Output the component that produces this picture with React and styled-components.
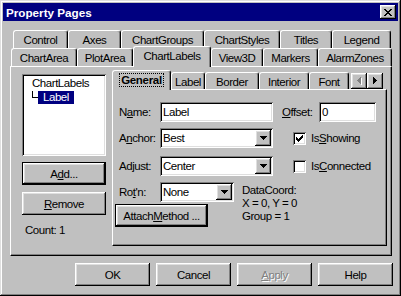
import styled, { createGlobalStyle, css } from "styled-components";

const GlobalStyle = createGlobalStyle`
  html, body {
    margin: 0;
    padding: 0;
    background: #c0c0c0;
  }
`;

const raised = css`
  background: #c0c0c0;
  box-shadow: inset -1px -1px #000, inset 1px 1px #fff, inset -2px -2px #808080,
    inset 2px 2px #dfdfdf;
`;

const sunken = css`
  background: #fff;
  box-shadow: inset 1px 1px #808080, inset -1px -1px #fff, inset 2px 2px #000,
    inset -2px -2px #dfdfdf;
`;

const Window = styled.div`
  width: 401px;
  height: 296px;
  box-sizing: border-box;
  padding: 3px;
  background: #c0c0c0;
  box-shadow: inset -1px -1px #000, inset 1px 1px #dfdfdf, inset -2px -2px #808080,
    inset 2px 2px #fff;
  display: flex;
  flex-direction: column;
  font-family: "Liberation Sans", Arial, sans-serif;
  font-size: 11.5px;
  letter-spacing: -0.45px;
  color: #000;
`;

const TitleBar = styled.div`
  height: 18px;
  background: #000080;
  display: flex;
  align-items: center;
  justify-content: space-between;
  padding: 0 2px 0 3px;
`;

const Title = styled.span`
  font-weight: 700;
  font-size: 11.7px;
  letter-spacing: 0;
  color: #fff;
`;

const CloseButton = styled.div`
  ${raised};
  width: 16px;
  height: 14px;
  display: flex;
  align-items: center;
  justify-content: center;
`;

const Content = styled.div`
  flex: 1;
  display: flex;
  flex-direction: column;
  padding: 9px 6px 0 7px;
`;

const TabRow = styled.div`
  display: flex;
  align-items: flex-end;
  height: ${(p) => p.$h}px;
  margin-left: ${(p) => p.$indent}px;
  margin-top: ${(p) => p.$mt || 0}px;
`;

const Tab = styled.div`
  box-sizing: border-box;
  width: ${(p) => p.$w}px;
  height: ${(p) => p.$h}px;
  background: #c0c0c0;
  border-top: 1px solid #fff;
  border-left: 1px solid #fff;
  border-right: 1px solid #000;
  border-radius: 3px 3px 0 0;
  box-shadow: inset -1px 0 #808080;
  display: flex;
  align-items: center;
  justify-content: center;
  padding-top: 1px;
  white-space: nowrap;
  ${(p) =>
    p.$active &&
    css`
      position: relative;
      z-index: 1;
      margin-bottom: -1px;
      padding-top: 0;
      padding-bottom: 2px;
    `}
`;

const Panel = styled.div`
  box-sizing: border-box;
  height: ${(p) => p.$h}px;
  border-top: 1px solid #fff;
  border-left: 1px solid #fff;
  border-right: 1px solid #000;
  border-bottom: 1px solid #000;
  box-shadow: inset -1px -1px #808080;
  background: #c0c0c0;
`;

const OuterPanel = styled(Panel)`
  display: flex;
  padding: 3px 0 0 11px;
`;

const LeftColumn = styled.div`
  width: 84px;
  margin-top: 4px;
  display: flex;
  flex-direction: column;
`;

const TreeBox = styled.div`
  ${sunken};
  height: 82px;
  box-sizing: border-box;
  padding: 3px 0 0 10px;
  display: flex;
  flex-direction: column;
  line-height: 13px;
`;

const TreeChild = styled.div`
  display: flex;
  align-items: flex-start;
  margin-top: 1px;
`;

const Connector = styled.span`
  width: 5px;
  height: 6px;
  border-left: 1px solid #000;
  border-bottom: 1px solid #000;
`;

const Selected = styled.span`
  background: #000080;
  color: #fff;
  padding: 0 5px;
  height: 13px;
  line-height: 13px;
`;

const Button = styled.div`
  ${raised};
  box-sizing: border-box;
  width: ${(p) => (p.$w ? `${p.$w}px` : "100%")};
  height: 23px;
  margin-top: ${(p) => p.$mt || 0}px;
  margin-left: ${(p) => p.$ml || 0}px;
  display: flex;
  align-items: center;
  justify-content: center;
  white-space: nowrap;
  ${(p) =>
    p.$default &&
    css`
      border: 1px solid #000;
    `}
  ${(p) =>
    p.$disabled &&
    css`
      color: #808080;
      text-shadow: 1px 1px #fff;
    `}
`;

const Count = styled.div`
  margin-top: 9px;
  padding-left: 3px;
  line-height: 13px;
`;

const Inner = styled.div`
  margin-left: 6px;
  width: 275px;
  display: flex;
  flex-direction: column;
`;

const ScrollButton = styled.div`
  ${raised};
  width: 16px;
  height: 16px;
  align-self: flex-start;
  margin-top: 3px;
  margin-left: ${(p) => p.$ml || 0}px;
  display: flex;
  align-items: center;
  justify-content: center;
`;

const InnerPanel = styled(Panel)`
  padding: 12px 0 0 6px;
  display: flex;
  flex-direction: column;
`;

const FormRow = styled.div`
  display: flex;
  align-items: center;
  height: 20px;
  margin-top: ${(p) => p.$mt || 0}px;
`;

const FieldLabel = styled.span`
  width: ${(p) => p.$w || 41}px;
  margin-left: ${(p) => p.$ml || 0}px;
  white-space: nowrap;
`;

const TextField = styled.div`
  ${sunken};
  box-sizing: border-box;
  width: ${(p) => p.$w}px;
  height: 20px;
  padding-left: 3px;
  display: flex;
  align-items: center;
`;

const Combo = styled(TextField)`
  justify-content: space-between;
  padding-right: 2px;
`;

const DropButton = styled.div`
  ${raised};
  width: 16px;
  height: 16px;
  display: flex;
  align-items: center;
  justify-content: center;
`;

const CheckGroup = styled.div`
  display: flex;
  align-items: center;
  gap: 5px;
  margin-left: 20px;
`;

const CheckBox = styled.div`
  ${sunken};
  width: 13px;
  height: 13px;
  display: flex;
  align-items: center;
  justify-content: center;
`;

const BottomBlock = styled.div`
  display: flex;
  margin-top: 6px;
`;

const LeftStack = styled.div`
  width: 115px;
  display: flex;
  flex-direction: column;
`;

const DataCoord = styled.div`
  margin-left: 8px;
  margin-top: 2px;
  line-height: 13px;
`;

const ButtonRow = styled.div`
  display: flex;
  justify-content: flex-end;
  gap: 6px;
  margin-top: 7px;
  margin-right: -1px;
`;

const U = styled.span`
  text-decoration: underline;
`;

const Focus = styled.span`
  outline: 1px dotted #000;
  padding: 0 1px;
  font-weight: 700;
  letter-spacing: -0.3px;
`;

function DownArrow() {
  return (
    <svg width="7" height="4" viewBox="0 0 7 4" shapeRendering="crispEdges">
      <polygon points="0,0 7,0 3.5,4" fill="#000" />
    </svg>
  );
}

function Arrow({ dir, disabled }) {
  const pts = dir === "left" ? "4,0 4,7 0,3.5" : "0,0 0,7 4,3.5";
  return (
    <svg width="5" height="8" viewBox="0 0 5 8" shapeRendering="crispEdges">
      {disabled && <polygon points={pts} fill="#fff" transform="translate(1,1)" />}
      <polygon points={pts} fill={disabled ? "#808080" : "#000"} />
    </svg>
  );
}

function CloseGlyph() {
  return (
    <svg width="8" height="7" viewBox="0 0 8 7" shapeRendering="crispEdges">
      <path d="M0 0h2v1h-2z M6 0h2v1h-2z M1 1h2v1h-2z M5 1h2v1h-2z M2 2h4v1h-4z M3 3h2v1h-2z M2 4h4v1h-4z M1 5h2v1h-2z M5 5h2v1h-2z M0 6h2v1h-2z M6 6h2v1h-2z" fill="#000" />
    </svg>
  );
}

function Check() {
  return (
    <svg width="7" height="7" viewBox="0 0 7 7" shapeRendering="crispEdges">
      <path d="M6 0h1v3h-1z M5 1h1v3h-1z M4 2h1v3h-1z M3 3h1v3h-1z M2 4h1v3h-1z M1 3h1v3h-1z M0 2h1v3h-1z" fill="#000" />
    </svg>
  );
}

const backTabs = [
  ["Control", 55],
  ["Axes", 53],
  ["ChartGroups", 83],
  ["ChartStyles", 76],
  ["Titles", 52],
  ["Legend", 59],
];

const frontTabs = [
  ["ChartArea", 66],
  ["PlotArea", 56],
  ["ChartLabels", 78, true],
  ["View3D", 52],
  ["Markers", 55],
  ["AlarmZones", 74],
];

const innerTabs = [
  ["Label", 34],
  ["Border", 54],
  ["Interior", 50],
  ["Font", 40],
];

export default function App() {
  return (
    <>
      <GlobalStyle />
      <Window>
        <TitleBar>
          <Title>Property Pages</Title>
          <CloseButton>
            <CloseGlyph />
          </CloseButton>
        </TitleBar>
        <Content>
          <TabRow $h={18} $indent={3}>
            {backTabs.map(([name, w]) => (
              <Tab key={name} $w={w} $h={18}>
                {name}
              </Tab>
            ))}
          </TabRow>
          <TabRow $h={20} $indent={1} $mt={-2}>
            {frontTabs.map(([name, w, active]) => (
              <Tab key={name} $w={w} $h={active ? 21 : 18} $active={active}>
                {name}
              </Tab>
            ))}
          </TabRow>
          <OuterPanel $h={190}>
            <LeftColumn>
              <TreeBox>
                <span>ChartLabels</span>
                <TreeChild>
                  <Connector />
                  <Selected>Label</Selected>
                </TreeChild>
              </TreeBox>
              <Button $default $mt={6}>
                A<U>d</U>d...
              </Button>
              <Button $mt={7}>
                <U>R</U>emove
              </Button>
              <Count>Count: 1</Count>
            </LeftColumn>
            <Inner>
              <TabRow $h={19} $indent={0}>
                <Tab $w={59} $h={20} $active>
                  <Focus>General</Focus>
                </Tab>
                {innerTabs.map(([name, w]) => (
                  <Tab key={name} $w={w} $h={17}>
                    {name}
                  </Tab>
                ))}
                <ScrollButton $ml={2}>
                  <Arrow dir="left" disabled />
                </ScrollButton>
                <ScrollButton>
                  <Arrow dir="right" />
                </ScrollButton>
              </TabRow>
              <InnerPanel $h={157}>
                <FormRow>
                  <FieldLabel>
                    N<U>a</U>me:
                  </FieldLabel>
                  <TextField $w={113}>Label</TextField>
                  <FieldLabel $w={37} $ml={9}>
                    <U>O</U>ffset:
                  </FieldLabel>
                  <TextField $w={57}>0</TextField>
                </FormRow>
                <FormRow $mt={6}>
                  <FieldLabel>
                    A<U>n</U>chor:
                  </FieldLabel>
                  <Combo $w={113}>
                    Best
                    <DropButton>
                      <DownArrow />
                    </DropButton>
                  </Combo>
                  <CheckGroup>
                    <CheckBox>
                      <Check />
                    </CheckBox>
                    <span>
                      Is<U>S</U>howing
                    </span>
                  </CheckGroup>
                </FormRow>
                <FormRow $mt={8}>
                  <FieldLabel>Adjust:</FieldLabel>
                  <Combo $w={113}>
                    Center
                    <DropButton>
                      <DownArrow />
                    </DropButton>
                  </Combo>
                  <CheckGroup>
                    <CheckBox />
                    <span>
                      Is<U>C</U>onnected
                    </span>
                  </CheckGroup>
                </FormRow>
                <BottomBlock>
                  <LeftStack>
                    <FormRow>
                      <FieldLabel>
                        Ro<U>t</U>'n:
                      </FieldLabel>
                      <Combo $w={74}>
                        None
                        <DropButton>
                          <DownArrow />
                        </DropButton>
                      </Combo>
                    </FormRow>
                    <Button $default $w={93} $mt={2} $ml={-4}>
                      Attach<U>M</U>ethod ...
                    </Button>
                  </LeftStack>
                  <DataCoord>
                    DataCoord:
                    <br />X = 0, Y = 0
                    <br />
                    Group = 1
                  </DataCoord>
                </BottomBlock>
              </InnerPanel>
            </Inner>
          </OuterPanel>
          <ButtonRow>
            <Button $w={75}>OK</Button>
            <Button $w={75}>Cancel</Button>
            <Button $w={75} $disabled>
              <U>A</U>pply
            </Button>
            <Button $w={75}>Help</Button>
          </ButtonRow>
        </Content>
      </Window>
    </>
  );
}
